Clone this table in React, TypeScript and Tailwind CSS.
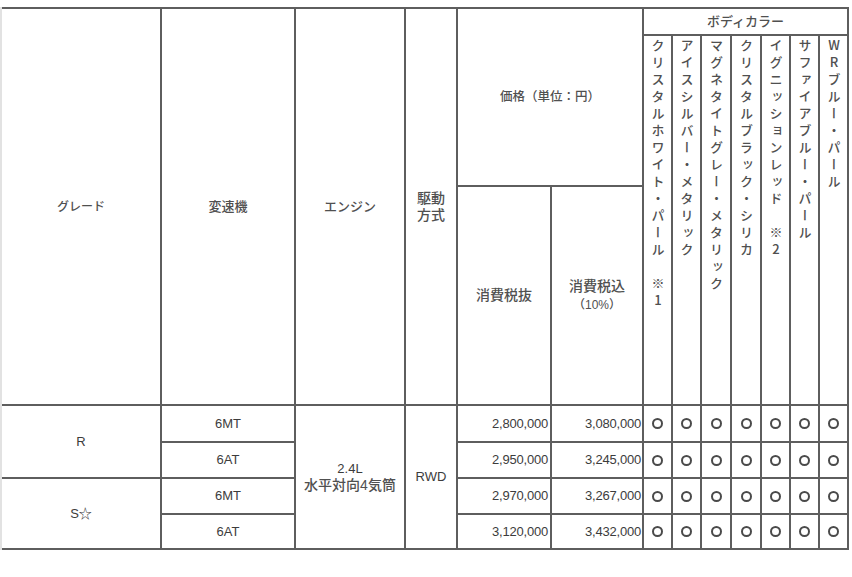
const colors = [
    'クリスタルホワイト・パール　※1',
    'アイスシルバー・メタリック',
    'マグネタイトグレー・メタリック',
    'クリスタルブラック・シリカ',
    'イグニッションレッド　※2',
    'サファイアブルー・パール',
    'WRブルー・パール',
]

const colorCols = ['col-start-7', 'col-start-8', 'col-start-9', 'col-start-10', 'col-start-11', 'col-start-12', 'col-start-13']
const rowStarts = ['row-start-4', 'row-start-5', 'row-start-6', 'row-start-7']

const rows = [
    { tm: '6MT', ex: '2,800,000', inc: '3,080,000' },
    { tm: '6AT', ex: '2,950,000', inc: '3,245,000' },
    { tm: '6MT', ex: '2,970,000', inc: '3,267,000' },
    { tm: '6AT', ex: '3,120,000', inc: '3,432,000' },
]

const cell = 'bg-white flex items-center justify-center text-center'

export default function App() {
    return (
        <div className="w-[852px] h-[577px] bg-white overflow-hidden pt-[7px] text-[#505050] font-medium [font-family:'Liberation_Sans','Noto_Sans_CJK_JP',sans-serif]">
            <div className="w-[849px] grid gap-[2px] bg-[#5e5e5e] pt-[2px] pb-[2px] pr-[2px] border-l-2 border-[#e2e2e2] grid-cols-[158px_132px_108px_50px_92px_90px_27px_27px_28px_28px_27px_27px_27px] grid-rows-[25px_149px_217px_35px_34px_34px_33px]">
                {/* header */}
                <div className={`${cell} col-start-1 row-start-1 row-span-3 text-[12px]`}>グレード</div>
                <div className={`${cell} col-start-2 row-start-1 row-span-3 text-[13px]`}>変速機</div>
                <div className={`${cell} col-start-3 row-start-1 row-span-3 text-[13px]`}>エンジン</div>
                <div className={`${cell} col-start-4 row-start-1 row-span-3 text-[14px] leading-[17px]`}>
                    <div>駆動<br />方式</div>
                </div>
                <div className={`${cell} col-start-5 col-span-2 row-start-1 row-span-2 text-[12.5px]`}>価格（単位：円）</div>
                <div className={`${cell} col-start-7 col-span-7 row-start-1 text-[13px]`}>ボディカラー</div>
                <div className={`${cell} col-start-5 row-start-3 text-[14px]`}>消費税抜</div>
                <div className={`${cell} col-start-6 row-start-3 text-[14px] leading-[18px]`}>
                    <div>消費税込<br /><span className="text-[12px]">（10%）</span></div>
                </div>
                {colors.map((c, i) => (
                    <div key={c} className={`bg-white flex justify-center items-start pt-[3px] row-start-2 row-span-2 ${colorCols[i]}`}>
                        <span className="[writing-mode:vertical-rl] [text-orientation:upright] text-[13px] tracking-[4px] leading-[16px] [font-family:'Noto_Sans_CJK_JP',sans-serif]">
                            {c}
                        </span>
                    </div>
                ))}

                {/* body */}
                <div className={`${cell} col-start-1 row-start-4 row-span-2 text-[13px] font-normal text-[#3c3c3c]`}>R</div>
                <div className={`${cell} col-start-1 row-start-6 row-span-2 text-[13px] font-normal text-[#3c3c3c]`}>S☆</div>
                <div className={`${cell} col-start-3 row-start-4 row-span-4 text-[14px] leading-[17px]`}>
                    <div><span className="font-normal text-[13px] text-[#3c3c3c]">2.4L</span><br />水平対向4気筒</div>
                </div>
                <div className={`${cell} col-start-4 row-start-4 row-span-4 text-[13px] font-normal text-[#3c3c3c]`}>RWD</div>
                {rows.map((r, i) => (
                    <div key={i} className="contents">
                        <div className={`${cell} col-start-2 ${rowStarts[i]} text-[13px] font-normal text-[#3c3c3c]`}>{r.tm}</div>
                        <div className={`bg-white flex items-center justify-end pr-[2px] col-start-5 ${rowStarts[i]} text-[13px] font-normal text-[#3c3c3c] tracking-[-0.2px]`}>{r.ex}</div>
                        <div className={`bg-white flex items-center justify-end pr-[1px] col-start-6 ${rowStarts[i]} text-[13px] font-normal text-[#3c3c3c] tracking-[-0.2px]`}>{r.inc}</div>
                        {colorCols.map(cc => (
                            <div key={cc} className={`${cell} ${cc} ${rowStarts[i]}`}>
                                <span className="inline-block w-[11px] h-[11px] rounded-full border-2 border-[#4a4a4a]" />
                            </div>
                        ))}
                    </div>
                ))}
            </div>
        </div>
    )
}
